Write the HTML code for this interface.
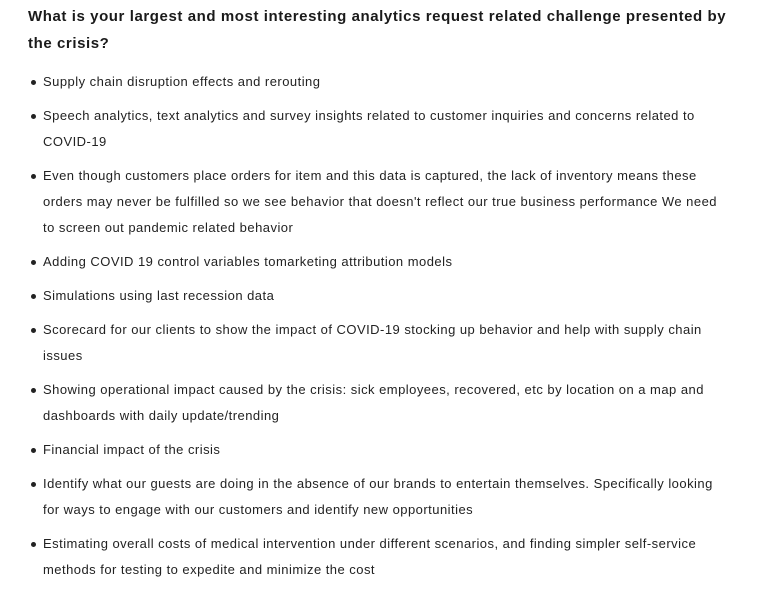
<!DOCTYPE html>
<html><head><style>
body{margin:0;background:#fff;font-family:"Liberation Sans",Arial,sans-serif;color:#222;}
h3{position:absolute;left:28px;top:3px;margin:0;font-size:15px;font-weight:bold;line-height:27px;color:#1a1a1a;white-space:nowrap;letter-spacing:0.58px}
ul{position:absolute;left:0;top:69px;margin:0;padding:0 0 0 43px;list-style:none;font-size:13px;line-height:26px;white-space:nowrap;letter-spacing:0.47px}
li{position:relative;margin-bottom:8px}
li:before{content:"";position:absolute;left:-12px;top:11px;width:5px;height:5px;border-radius:50%;background:#222}
</style></head><body>
<h3>What is your largest and most interesting analytics request related challenge presented by<br>the crisis?</h3>
<ul>
<li>Supply chain disruption effects and rerouting</li>
<li>Speech analytics, text analytics and survey insights related to customer inquiries and concerns related to<br>COVID-19</li>
<li>Even though customers place orders for item and this data is captured, the lack of inventory means these<br>orders may never be fulfilled so we see behavior that doesn't reflect our true business performance We need<br>to screen out pandemic related behavior</li>
<li>Adding COVID 19 control variables tomarketing attribution models</li>
<li>Simulations using last recession data</li>
<li>Scorecard for our clients to show the impact of COVID-19 stocking up behavior and help with supply chain<br>issues</li>
<li>Showing operational impact caused by the crisis: sick employees, recovered, etc by location on a map and<br>dashboards with daily update/trending</li>
<li>Financial impact of the crisis</li>
<li>Identify what our guests are doing in the absence of our brands to entertain themselves. Specifically looking<br>for ways to engage with our customers and identify new opportunities</li>
<li>Estimating overall costs of medical intervention under different scenarios, and finding simpler self-service<br>methods for testing to expedite and minimize the cost</li>
</ul>
</body></html>
